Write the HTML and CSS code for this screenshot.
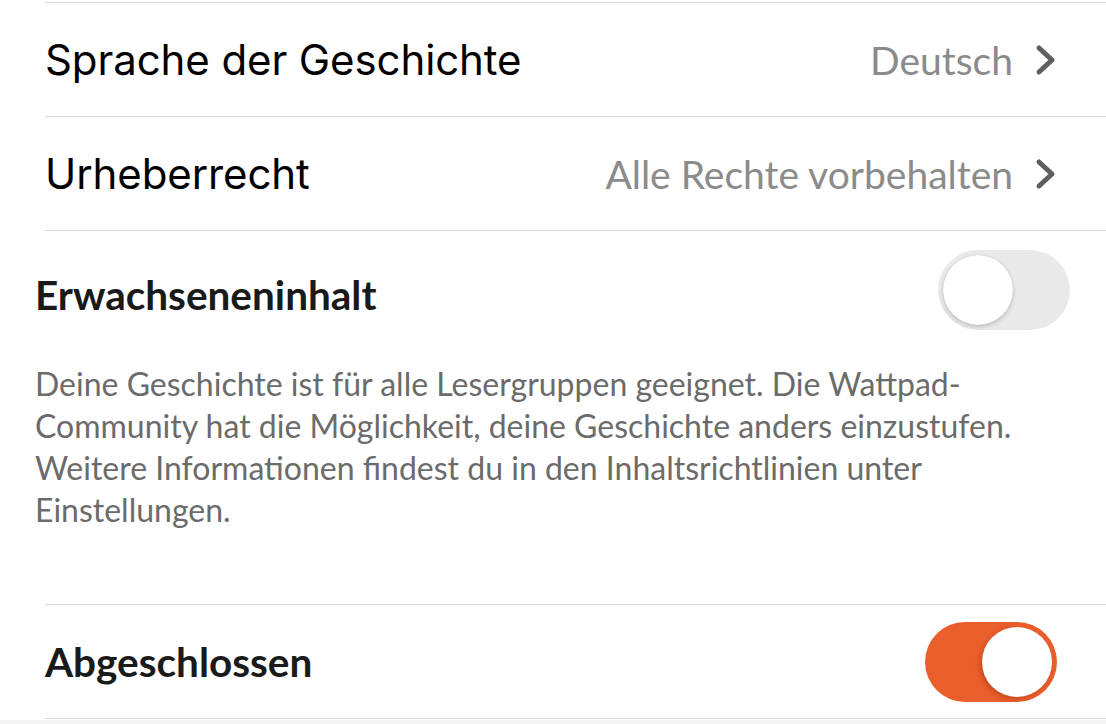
FILE: index.html
```html
<!DOCTYPE html>
<html lang="de">
<head>
    <meta charset="UTF-8">
    <meta name="viewport" content="width=device-width, initial-scale=1.0">
    <title>Geschichte bearbeiten</title>
    <link rel="stylesheet" href="styles.css">
</head>
<body>
    <div class="list">
        <div class="row">
            <span class="row-label">Sprache der Geschichte</span>
            <span class="row-value">Deutsch</span>
            <svg class="chevron" viewBox="0 0 22 32"><polyline points="4,4 17,16 4,28"/></svg>
        </div>
        <div class="row">
            <span class="row-label">Urheberrecht</span>
            <span class="row-value">Alle Rechte vorbehalten</span>
            <svg class="chevron" viewBox="0 0 22 32"><polyline points="4,4 17,16 4,28"/></svg>
        </div>
    </div>

    <section class="mature">
        <div class="mature-head">
            <h2 class="title">Erwachseneninhalt</h2>
            <span class="switch"><span class="knob"></span></span>
        </div>
        <p class="note">Deine Geschichte ist für alle Lesergruppen geeignet. Die Wattpad-Community hat die Möglichkeit, deine Geschichte anders einzustufen. Weitere Informationen findest du in den Inhaltsrichtlinien unter Einstellungen.</p>
    </section>

    <div class="list">
        <div class="row row-switch">
            <span class="title">Abgeschlossen</span>
            <span class="switch on"><span class="knob"></span></span>
        </div>
    </div>

    <div class="footer"></div>
</body>
</html>
```

FILE: styles.css
```css
body {
    margin: 0;
    padding-top: 2px;
    background: #fff;
    font-family: Lato, "Noto Sans", sans-serif;
    overflow: hidden;
}
.list {
    margin-left: 45px;
    border-bottom: 1px solid #d9d9d9;
}
.row {
    display: flex;
    align-items: center;
    height: 113px;
    padding-right: 49px;
    border-top: 1px solid #d9d9d9;
}
.row-label {
    flex: 1;
    font-family: Inter, "Liberation Sans", sans-serif;
    font-size: 42px;
    letter-spacing: -0.1px;
    color: #000;
}
.row-value {
    font-size: 39px;
    color: #8b8b8b;
}
.chevron {
    width: 22px;
    height: 32px;
    margin-left: 22px;
    fill: none;
    stroke: #5f5f5f;
    stroke-width: 5;
    stroke-linecap: round;
    stroke-linejoin: round;
}
.title {
    margin: 0;
    font-size: 40.5px;
    font-weight: 700;
    color: #1a1a1a;
}
.mature {
    padding: 19px 36px 0 35px;
}
.mature-head {
    display: flex;
    justify-content: space-between;
    align-items: flex-start;
}
.mature-head .title {
    margin-top: 20px;
}
.note {
    margin: 33px 0 73px;
    font-size: 32px;
    line-height: 42px;
    color: #6b6b6b;
}
.switch {
    position: relative;
    width: 132px;
    height: 80px;
    border-radius: 40px;
    background: #e9e9e9;
    flex-shrink: 0;
}
.knob {
    position: absolute;
    top: 5px;
    left: 5px;
    width: 70px;
    height: 70px;
    border-radius: 50%;
    background: #fff;
    box-shadow: 0 2px 4px rgba(0, 0, 0, 0.18), 0 0 1px rgba(0, 0, 0, 0.2);
}
.row-switch {
    justify-content: space-between;
    padding-right: 49px;
}
.switch.on {
    background: #ea5e2c;
}
.switch.on .knob {
    left: 57px;
    box-shadow: -2px 2px 5px rgba(120, 40, 10, 0.35);
}
.footer {
    height: 40px;
    margin-top: 1px;
    background: #f4f4f4;
}
```
